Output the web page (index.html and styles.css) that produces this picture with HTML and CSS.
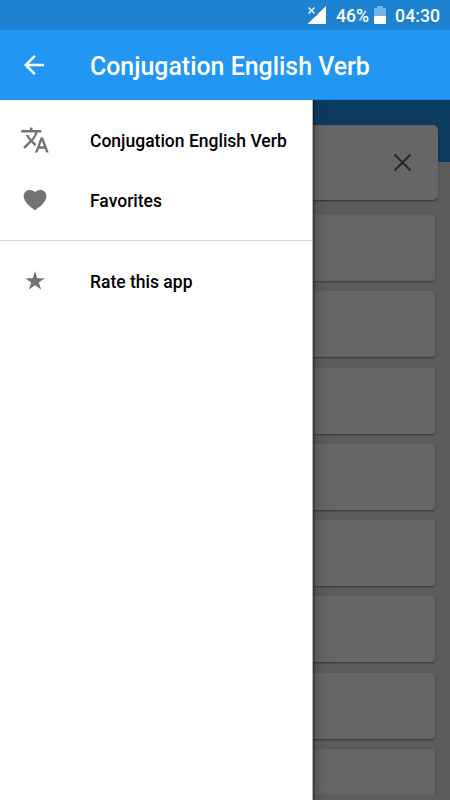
FILE: index.html
```html
<!DOCTYPE html>
<html lang="en">
<head>
<meta charset="utf-8">
<title>Conjugation English Verb</title>
<link rel="stylesheet" href="styles.css">
</head>
<body>
<div class="status">
  <svg class="signal" width="20" height="20" viewBox="0 0 20 20"><path d="M19 1v18H.5z" fill="#fff"/><path d="M0 0h10.500v9.500L6.500 13 0 10z" fill="#1c82d1"/><path d="M1.500 2.500l6 6M7.500 2.500l-6 6" stroke="#fff" stroke-width="1.300"/></svg>
  <span class="percent">46%</span>
  <svg class="battery" width="12" height="18" viewBox="0 0 12 18"><path d="M3 0h6v2h3v8H0V2h3z" fill="#72b3e4"/><path d="M0 10h12v8H0z" fill="#fff"/></svg>
  <span class="clock">04:30</span>
</div>
<header class="toolbar">
  <svg class="back" width="30" height="30" viewBox="0 0 24 24"><path d="M20 11H7.830l5.590-5.590L12 4l-8 8 8 8 1.410-1.410L7.830 13H20v-2z" fill="#fff"/></svg>
  <h1 class="title">Conjugation English Verb</h1>
</header>
<div class="body">
  <nav class="drawer">
    <a class="item"><svg class="icon" width="30" height="30" viewBox="0 0 24 24"><path d="M12.870 15.070l-2.540-2.510.03-.03c1.740-1.940 2.980-4.170 3.710-6.530H17V4h-7V2H8v2H1v1.990h11.170C11.500 7.920 10.440 9.750 9 11.350 8.070 10.320 7.300 9.190 6.690 8h-2c.73 1.630 1.730 3.170 2.980 4.560l-5.090 5.020L4 19l5-5 3.110 3.110.76-2.040zM18.500 10h-2L12 22h2l1.120-3h4.750L21 22h2l-4.500-12zm-2.620 7l1.620-4.330L19.120 17h-3.240z"/></svg><span>Conjugation English Verb</span></a>
    <a class="item"><svg class="icon" width="30" height="30" viewBox="0 0 24 24"><path d="M12 20.100C10.500 18.900 2.900 14.200 2.900 8.900c0-2.800 2.100-4.900 4.700-4.900 1.800 0 3.400.7 4.400 1.700 1-1 2.600-1.700 4.400-1.700 2.600 0 4.700 2.100 4.700 4.900 0 5.300-7.600 10-9.100 11.200z"/></svg><span>Favorites</span></a>
    <a class="item rate"><svg class="icon" width="30" height="30" viewBox="0 0 30 30"><path d="M15 4l2.350 7.150h7.450l-6 4.350 2.300 7.100-6.100-4.400-6.100 4.400 2.300-7.100-6-4.350h7.450z"/></svg><span>Rate this app</span></a>
  </nav>
  <main class="content">
    <div class="search"><svg width="30" height="30" viewBox="0 0 30 30"><path d="M6.500 6.500l16 16M22.500 6.500L6.500 22.500" stroke="#292929" stroke-width="2" fill="none"/></svg></div>
    <div class="list">
      <div class="card"></div><div class="card"></div><div class="card"></div><div class="card"></div>
      <div class="card"></div><div class="card"></div><div class="card"></div><div class="card"></div>
    </div>
  </main>
</div>
</body>
</html>
```
FILE: styles.css
```css
* { box-sizing: border-box; }
body { margin: 0; width: 450px; height: 800px; overflow: hidden; display: flex; flex-direction: column; font-family: Roboto, sans-serif; font-weight: 500; background: #fff; }
.status { height: 30px; flex: none; display: flex; align-items: center; justify-content: flex-end; padding-right: 10px; background: #1c82d1; color: #fff; font-size: 17.700px; line-height: 30px; }
.signal { margin-right: 9px; }
.percent { margin-right: 5px; padding-top: 2px; }
.battery { margin-right: 9px; }
.clock { padding-top: 2px; }
.toolbar { height: 70px; flex: none; display: flex; align-items: center; padding-left: 19px; background: #2196f3; color: #fff; border-bottom: 1px solid #1b88e0; }
.back { margin-right: 41px; }
.title { margin: 0; padding-top: 4px; font-size: 24.900px; font-weight: 500; line-height: 30px; white-space: nowrap; }
.body { flex: 1; min-height: 0; display: flex; }
.drawer { width: 313px; flex: none; padding-top: 10px; background: #fff; border-right: 1px solid #b5b5b5; position: relative; z-index: 1; box-shadow: 0 0 14px rgba(0, 0, 0, .32), 1px 0 2px rgba(0, 0, 0, .5); clip-path: inset(0 -24px 0 0); }
.item { height: 60px; display: flex; align-items: center; padding-left: 20px; gap: 40px; color: #000; font-size: 17.500px; white-space: nowrap; }
.item span { padding-top: 1px; }
.icon { fill: #737373; flex: none; }
.rate { margin-top: 10px; height: 82px; border-top: 1px solid #d4d4d4; }
.content { flex: 1; min-width: 0; height: 694px; padding-top: 25px; background: linear-gradient(#0d3c61 62px, #5c5c5c 62px); box-shadow: 0 6px #5c5c5c; }
.search { height: 75px; margin-right: 12px; padding-right: 20px; display: flex; align-items: center; justify-content: flex-end; background: #666; border-radius: 0 5px 5px 0; box-shadow: 0 1px 2px rgba(0, 0, 0, .45); }
.list { height: 579px; margin-top: 15px; padding-right: 15px; display: flex; flex-direction: column; gap: 10.300px; overflow: hidden; }
.card { height: 66px; flex: none; background: #656565; border-radius: 0 3px 3px 0; box-shadow: 0 1px 2px rgba(0, 0, 0, .42); }
```
